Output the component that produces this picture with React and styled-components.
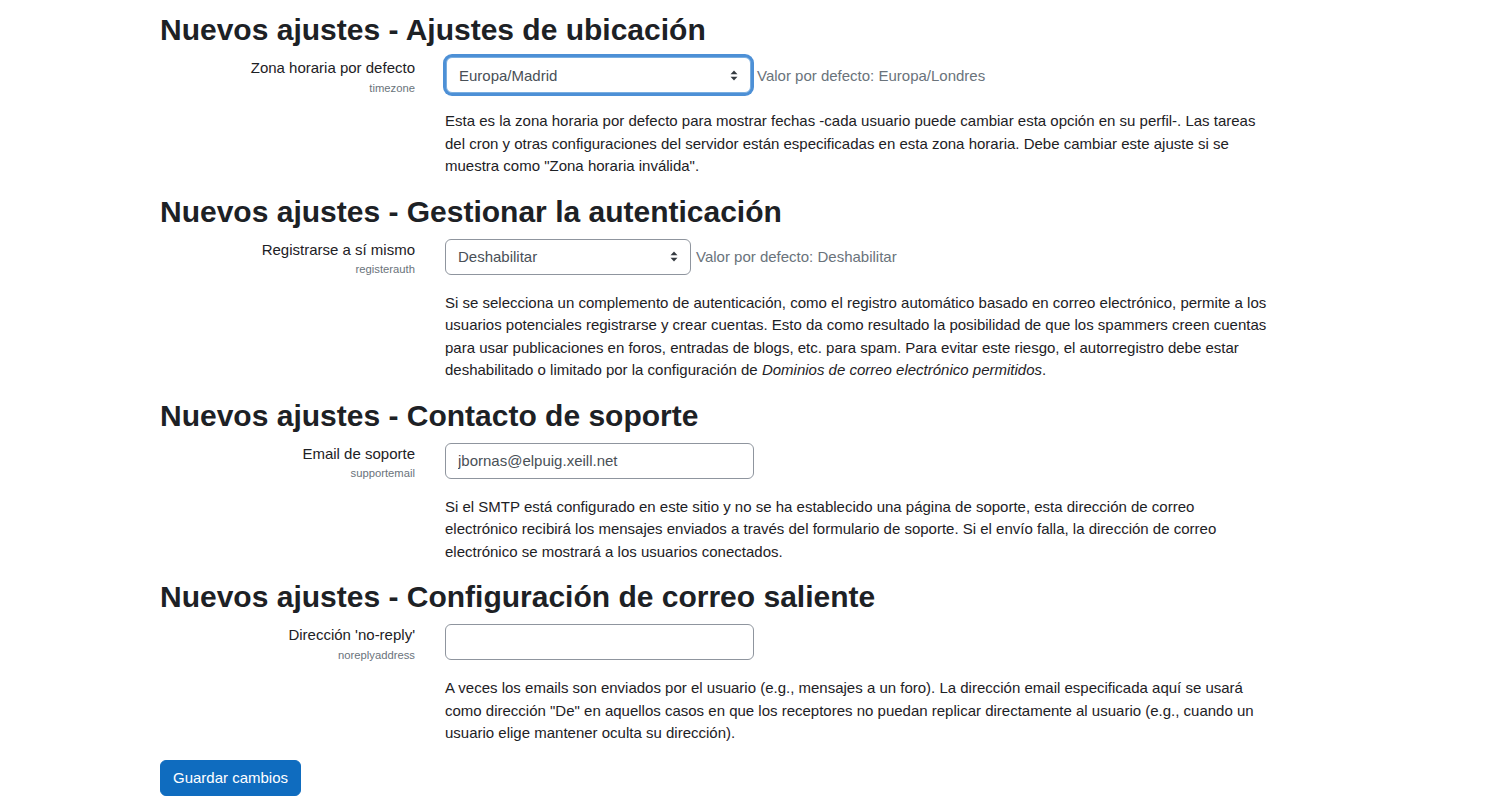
import React from 'react'
import styled, { createGlobalStyle } from 'styled-components'

const Global = createGlobalStyle`
  body {
    margin: 0;
    background: #fff;
    font-family: "Liberation Sans", Arial, sans-serif;
    color: #1d2125;
  }
`

const Page = styled.div`
  width: 1140px;
  padding: 12px 0 4px 160px;
`

const Heading = styled.h3`
  margin: 0;
  font-size: 30px;
  line-height: 36px;
  font-weight: 700;
  color: #1d2125;
  & + * { margin-top: 9px; }
`

const Section = styled.section`
  & + & { margin-top: 16px; }
`

const Row = styled.div`
  display: grid;
  grid-template-columns: 255px 830px;
  column-gap: 30px;
`

const LabelCol = styled.div`
  text-align: right;
`

const Label = styled.label`
  display: block;
  font-size: 15px;
  line-height: 22.5px;
  color: #1d2125;
`

const Name = styled.div`
  font-size: 11.25px;
  line-height: 17px;
  color: #6a737b;
`

const Controls = styled.div`
  display: flex;
  align-items: center;
  height: 36px;
`

const SelectBox = styled.div`
  box-sizing: border-box;
  width: ${p => p.width}px;
  height: 36px;
  display: flex;
  align-items: center;
  justify-content: space-between;
  padding: 0 12px;
  font-size: 15px;
  color: #495057;
  background: #fff;
  border: 1px solid ${p => (p.focused ? '#7aaee0' : '#8f959e')};
  border-radius: 6px;
  box-shadow: ${p => (p.focused ? '0 0 0 3px #4d90d6' : 'none')};
  margin-left: ${p => (p.focused ? '1px' : '0')};
`

const Input = styled.input`
  box-sizing: border-box;
  width: 309px;
  height: 36px;
  padding: 0 12px;
  font-family: inherit;
  font-size: 15px;
  color: #495057;
  border: 1px solid #8f959e;
  border-radius: 6px;
  outline: none;
`

const Default = styled.span`
  margin-left: ${p => p.gap || 5}px;
  font-size: 15px;
  color: #6a737b;
`

const Desc = styled.div`
  margin-top: 17px;
  max-width: ${p => p.maxWidth || 830}px;
  font-size: 15px;
  line-height: 22.5px;
  color: #1d2125;
  em { font-style: italic; }
`

const Button = styled.button`
  margin-top: 15px;
  height: 36px;
  padding: 0 12px;
  font-family: inherit;
  font-size: 15px;
  color: #fff;
  background: #0f6cbf;
  border: 1px solid #0f6cbf;
  border-radius: 6px;
`

const Arrows = () => (
  <svg width="8" height="11" viewBox="0 0 8 11">
    <path d="M4 0.5 L7.5 4.3 H0.5 Z" fill="#343a40" />
    <path d="M4 10.5 L7.5 6.7 H0.5 Z" fill="#343a40" />
  </svg>
)

const Select = ({ value, width, focused }) => (
  <SelectBox width={width} focused={focused}>
    <span>{value}</span>
    <Arrows />
  </SelectBox>
)

const Setting = ({ label, name, control, descWidth, children }) => (
  <Row>
    <LabelCol>
      <Label>{label}</Label>
      <Name>{name}</Name>
    </LabelCol>
    <div>
      <Controls>{control}</Controls>
      <Desc maxWidth={descWidth}>{children}</Desc>
    </div>
  </Row>
)

export default function App() {
  return (
    <Page>
      <Global />
      <Section>
        <Heading>Nuevos ajustes - Ajustes de ubicación</Heading>
        <Setting
          label="Zona horaria por defecto"
          name="timezone"
          control={
            <>
              <Select value="Europa/Madrid" width={305} focused />
              <Default gap={6}>Valor por defecto: Europa/Londres</Default>
            </>
          }
        >
          Esta es la zona horaria por defecto para mostrar fechas -cada usuario puede cambiar esta opción en su perfil-. Las tareas del cron y otras configuraciones del servidor están especificadas en esta zona horaria. Debe cambiar este ajuste si se muestra como "Zona horaria inválida".
        </Setting>
      </Section>
      <Section>
        <Heading>Nuevos ajustes - Gestionar la autenticación</Heading>
        <Setting
          label="Registrarse a sí mismo"
          name="registerauth"
          control={
            <>
              <Select value="Deshabilitar" width={246} />
              <Default>Valor por defecto: Deshabilitar</Default>
            </>
          }
        >
          Si se selecciona un complemento de autenticación, como el registro automático basado en correo electrónico, permite a los usuarios potenciales registrarse y crear cuentas. Esto da como resultado la posibilidad de que los spammers creen cuentas para usar publicaciones en foros, entradas de blogs, etc. para spam. Para evitar este riesgo, el autorregistro debe estar deshabilitado o limitado por la configuración de <em>Dominios de correo electrónico permitidos</em>.
        </Setting>
      </Section>
      <Section>
        <Heading>Nuevos ajustes - Contacto de soporte</Heading>
        <Setting
          label="Email de soporte"
          name="supportemail"
          descWidth={800}
          control={<Input type="text" defaultValue="jbornas@elpuig.xeill.net" />}
        >
          Si el SMTP está configurado en este sitio y no se ha establecido una página de soporte, esta dirección de correo electrónico recibirá los mensajes enviados a través del formulario de soporte. Si el envío falla, la dirección de correo electrónico se mostrará a los usuarios conectados.
        </Setting>
      </Section>
      <Section>
        <Heading>Nuevos ajustes - Configuración de correo saliente</Heading>
        <Setting
          label="Dirección 'no-reply'"
          name="noreplyaddress"
          control={<Input type="text" defaultValue="" />}
        >
          A veces los emails son enviados por el usuario (e.g., mensajes a un foro). La dirección email especificada aquí se usará como dirección "De" en aquellos casos en que los receptores no puedan replicar directamente al usuario (e.g., cuando un usuario elige mantener oculta su dirección).
        </Setting>
      </Section>
      <Button>Guardar cambios</Button>
    </Page>
  )
}
